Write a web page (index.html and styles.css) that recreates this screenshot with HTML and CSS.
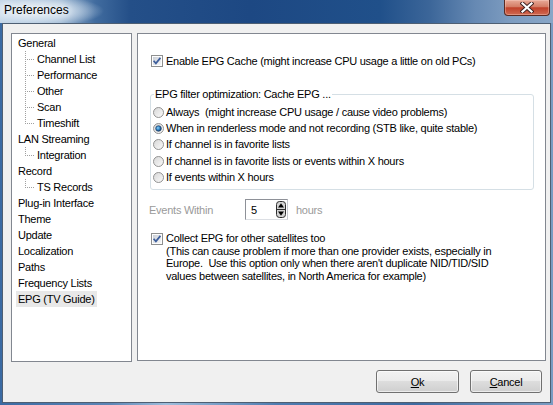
FILE: index.html
```html
<!DOCTYPE html>
<html>
<head>
<meta charset="utf-8">
<title>Preferences</title>
<link rel="stylesheet" href="styles.css">
</head>
<body>
<svg class="defs" width="0" height="0" aria-hidden="true">
  <defs>
    <linearGradient id="cbfill" x1="0" y1="0" x2="1" y2="1">
      <stop offset="0" stop-color="#c9ced6"/>
      <stop offset="1" stop-color="#f7f7f7"/>
    </linearGradient>
    <linearGradient id="rfill" x1="0" y1="0" x2="1" y2="1">
      <stop offset="0" stop-color="#d6d6d6"/>
      <stop offset="1" stop-color="#fbfbfb"/>
    </linearGradient>
    <radialGradient id="rdot" cx="0.4" cy="0.4" r="0.6">
      <stop offset="0" stop-color="#8fd3f7"/>
      <stop offset="0.6" stop-color="#2e7fc2"/>
      <stop offset="1" stop-color="#17406f"/>
    </radialGradient>
  </defs>
</svg>
<div class="window">
  <div class="titlebar">
    <span class="title">Preferences</span>
    <div class="close">
      <svg width="14" height="11" viewBox="0 0 14 11">
        <path d="M2.5 1.5 L11.5 9.5 M11.5 1.5 L2.5 9.5" stroke="#3b2020" stroke-width="4" stroke-linecap="square"/>
        <path d="M2.5 1.5 L11.5 9.5 M11.5 1.5 L2.5 9.5" stroke="#ffffff" stroke-width="2.2" stroke-linecap="square"/>
      </svg>
    </div>
  </div>
  <div class="client">
    <div class="main">
      <ul class="tree">
        <li class="node"><span class="lbl">General</span></li>
        <li class="child"><span class="ln"></span><span class="lbl">Channel List</span></li>
        <li class="child"><span class="ln"></span><span class="lbl">Performance</span></li>
        <li class="child"><span class="ln"></span><span class="lbl">Other</span></li>
        <li class="child"><span class="ln"></span><span class="lbl">Scan</span></li>
        <li class="child last"><span class="ln"></span><span class="lbl">Timeshift</span></li>
        <li class="node"><span class="lbl">LAN Streaming</span></li>
        <li class="child last"><span class="ln"></span><span class="lbl">Integration</span></li>
        <li class="node"><span class="lbl">Record</span></li>
        <li class="child last"><span class="ln"></span><span class="lbl">TS Records</span></li>
        <li class="node"><span class="lbl">Plug-in Interface</span></li>
        <li class="node"><span class="lbl">Theme</span></li>
        <li class="node"><span class="lbl">Update</span></li>
        <li class="node"><span class="lbl">Localization</span></li>
        <li class="node"><span class="lbl">Paths</span></li>
        <li class="node"><span class="lbl">Frequency Lists</span></li>
        <li class="node"><span class="lbl sel">EPG (TV Guide)</span></li>
      </ul>
      <div class="panel">
        <div class="check-row">
          <svg class="cb" width="12" height="12" viewBox="0 0 12 12">
            <rect x="0.5" y="0.5" width="11" height="11" fill="#fdfdfd" stroke="#8e8f8f"/>
            <rect x="2" y="2" width="8" height="8" fill="url(#cbfill)"/>
            <path d="M2.6 5.8 L4.9 8.4 L9.4 2.9" fill="none" stroke="#3d5e9c" stroke-width="1.7"/>
          </svg>
          <span>Enable EPG Cache (might increase CPU usage a little on old PCs)</span>
        </div>
        <fieldset class="group">
          <legend>EPG filter optimization: Cache EPG ...</legend>
          <div class="radio-row">
            <svg class="rb" width="11" height="11" viewBox="0 0 11 11"><circle cx="5.5" cy="5.5" r="5" fill="url(#rfill)" stroke="#939393"/></svg>
            <span>Always&nbsp; (might increase CPU usage / cause video problems)</span>
          </div>
          <div class="radio-row">
            <svg class="rb" width="11" height="11" viewBox="0 0 11 11"><circle cx="5.5" cy="5.5" r="5" fill="url(#rfill)" stroke="#939393"/><circle cx="5.5" cy="5.5" r="2.8" fill="url(#rdot)" stroke="#1c3d66" stroke-width="0.7"/></svg>
            <span>When in renderless mode and not recording (STB like, quite stable)</span>
          </div>
          <div class="radio-row">
            <svg class="rb" width="11" height="11" viewBox="0 0 11 11"><circle cx="5.5" cy="5.5" r="5" fill="url(#rfill)" stroke="#939393"/></svg>
            <span>If channel is in favorite lists</span>
          </div>
          <div class="radio-row r4">
            <svg class="rb" width="11" height="11" viewBox="0 0 11 11"><circle cx="5.5" cy="5.5" r="5" fill="url(#rfill)" stroke="#939393"/></svg>
            <span>If channel is in favorite lists or events within X hours</span>
          </div>
          <div class="radio-row">
            <svg class="rb" width="11" height="11" viewBox="0 0 11 11"><circle cx="5.5" cy="5.5" r="5" fill="url(#rfill)" stroke="#939393"/></svg>
            <span>If events within X hours</span>
          </div>
        </fieldset>
        <div class="events-row">
          <span class="dis ev-label">Events Within</span>
          <div class="spin">
            <span class="spin-val">5</span>
            <svg class="spin-btn" width="10" height="17" viewBox="0 0 10 17">
              <rect x="0.5" y="0.5" width="9" height="16" rx="3" fill="#d4d4d4" stroke="#2e2e2e"/>
              <line x1="1" y1="8.5" x2="9" y2="8.5" stroke="#2e2e2e"/>
              <path d="M5 2.2 L8 6.6 L2 6.6 Z" fill="#000"/>
              <path d="M2 10.4 L8 10.4 L5 14.8 Z" fill="#000"/>
            </svg>
          </div>
          <span class="dis">hours</span>
        </div>
        <div class="check-row two">
          <svg class="cb" width="12" height="12" viewBox="0 0 12 12">
            <rect x="0.5" y="0.5" width="11" height="11" fill="#fdfdfd" stroke="#8e8f8f"/>
            <rect x="2" y="2" width="8" height="8" fill="url(#cbfill)"/>
            <path d="M2.6 5.8 L4.9 8.4 L9.4 2.9" fill="none" stroke="#3d5e9c" stroke-width="1.7"/>
          </svg>
          <div class="desc">Collect EPG for other satellites too<br>(This can cause problem if more than one provider exists, especially in<br>Europe.&nbsp; Use this option only when there aren't duplicate NID/TID/SID<br>values between satellites, in North America for example)</div>
        </div>
      </div>
    </div>
    <div class="buttons">
      <button class="btn ok"><u>O</u>k</button>
      <button class="btn cancel"><u>C</u>ancel</button>
    </div>
  </div>
</div>
</body>
</html>
```
FILE: styles.css
```css
html, body {
  margin: 0;
  padding: 0;
}
body {
  width: 553px;
  height: 405px;
  overflow: hidden;
  font-family: "Liberation Sans", Arial, sans-serif;
  font-size: 11px;
  letter-spacing: -0.25px;
  color: #000;
}
.defs {
  display: block;
  width: 0;
  height: 0;
  overflow: hidden;
}
.window {
  width: 553px;
  height: 405px;
  display: flex;
  flex-direction: column;
  background: linear-gradient(to right, #3a6aa3 0%, #5d86b6 20%, #9fbedc 30%, #4f7cb0 50%, #3e6aa0 75%, #7a9cc2 100%);
}
.titlebar {
  height: 23px;
  flex: none;
  display: flex;
  align-items: flex-start;
  background:
    radial-gradient(ellipse 70px 16px at 34px 11px, rgba(235,242,248,0.95) 0%, rgba(220,232,243,0.7) 55%, rgba(200,216,232,0) 100%),
    linear-gradient(to right, #bcd0e4 0px, #9ab5d1 60px, #416c9f 95px, #244f88 130px, #1d4883 250px, #20508a 380px, #3c6699 430px, #6689b3 475px, #7d9cc0 510px, #88a6c7 553px);
}
.title {
  margin: 3px 0 0 4px;
  font-size: 12px;
  line-height: 14px;
  letter-spacing: 0;
  color: #000;
  text-shadow: 0 0 6px #fff, 0 0 10px #fff;
}
.close {
  margin: 0 3px 0 auto;
  width: 46px;
  height: 16px;
  box-sizing: border-box;
  border: 1px solid #5a2a22;
  border-top: none;
  border-radius: 0 0 4px 4px;
  background: linear-gradient(to bottom, #e8aa98 0%, #d47d66 45%, #c0412a 52%, #cf6a52 100%);
  display: flex;
  align-items: center;
  justify-content: center;
  box-shadow: inset 0 0 0 1px rgba(255,220,210,0.35);
}
.close svg {
  display: block;
}
.client {
  flex: 1;
  margin: 0 2px 2px 2px;
  border: 1px solid #4e5f73;
  background: #f0f0f0;
  padding: 9px 4px 0 8px;
  display: flex;
  flex-direction: column;
}
.main {
  display: flex;
  align-items: flex-start;
  gap: 5px;
}
.tree {
  list-style: none;
  margin: 0;
  padding: 1px 0 0 0;
  width: 121px;
  height: 329px;
  box-sizing: border-box;
  border: 1px solid #828790;
  background: #fff;
  flex: none;
}
.tree li {
  height: 16px;
  display: flex;
  align-items: center;
  white-space: nowrap;
}
.tree .node {
  padding-left: 4px;
}
.lbl {
  padding: 0 2px;
  line-height: 16px;
}
.lbl.sel {
  background: #e8e8e8;
}
.child .ln {
  margin-left: 13px;
  width: 10px;
  height: 16px;
  flex: none;
  background-image:
    repeating-linear-gradient(to bottom, #a0a0a0 0 1px, transparent 1px 2px),
    repeating-linear-gradient(to right, #a0a0a0 0 1px, transparent 1px 2px);
  background-repeat: no-repeat;
  background-position: 0 0, 2px 8px;
  background-size: 1px 16px, 8px 1px;
}
.child.last .ln {
  background-size: 1px 9px, 8px 1px;
}
.panel {
  width: 409px;
  height: 328px;
  box-sizing: border-box;
  border: 1px solid #828790;
  background: #fff;
  padding: 19px 12px 0 12px;
  flex: none;
}
.check-row {
  display: flex;
  align-items: center;
  height: 16px;
  padding-left: 1px;
  white-space: nowrap;
}
.cb {
  display: block;
  flex: none;
  margin-right: 3px;
}
.group {
  margin: 19px 0 0 0;
  width: 384px;
  box-sizing: border-box;
  border: 1px solid #d5dfe5;
  border-radius: 3px;
  padding: 3px 0 4px 1px;
  min-width: 0;
}
.group legend {
  padding: 0 1px;
  margin-left: 2px;
  line-height: 13px;
  white-space: nowrap;
}
.radio-row {
  display: flex;
  align-items: center;
  height: 16px;
  padding-left: 1px;
  white-space: nowrap;
}
.radio-row.r4 {
  height: 17px;
  padding-top: 1px;
  box-sizing: border-box;
}
.rb {
  display: block;
  flex: none;
  margin-right: 2px;
}
.events-row {
  display: flex;
  align-items: center;
  margin-top: 9px;
  height: 21px;
}
.dis {
  color: #9a9a9a;
}
.ev-label {
  width: 96px;
  margin-left: -1px;
  flex: none;
}
.spin {
  width: 43px;
  height: 21px;
  box-sizing: border-box;
  border: 1px solid #8e9198;
  border-right-color: #c5c8cf;
  border-bottom-color: #dcdfe4;
  background: #fff;
  display: flex;
  align-items: center;
  justify-content: space-between;
  padding: 0 1px 0 5px;
  margin-right: 8px;
}
.spin-btn {
  display: block;
}
.check-row.two {
  margin-top: 12px;
  height: auto;
  align-items: flex-start;
}
.check-row.two .cb {
  margin-top: 1px;
}
.desc {
  line-height: 12.5px;
  margin-top: 0;
  white-space: nowrap;
}
.buttons {
  display: flex;
  justify-content: flex-end;
  gap: 11px;
  margin-top: 8px;
  margin-right: 4px;
}
.btn {
  height: 23px;
  box-sizing: border-box;
  border: 1px solid #707070;
  border-radius: 3px;
  background: linear-gradient(to bottom, #f2f2f2 0%, #ebebeb 45%, #dddddd 50%, #cfcfcf 100%);
  box-shadow: inset 0 0 0 1px rgba(255,255,255,0.6);
  font-family: "Liberation Sans", Arial, sans-serif;
  font-size: 11px;
  letter-spacing: -0.25px;
  color: #000;
  padding: 0;
}
.btn.ok {
  width: 83px;
}
.btn.cancel {
  width: 72px;
}
```
